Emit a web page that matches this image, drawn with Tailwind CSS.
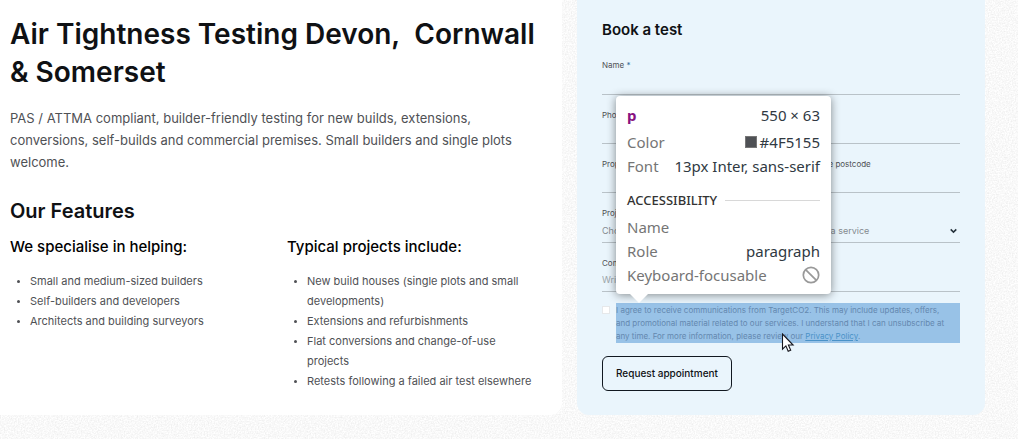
<!DOCTYPE html>
<html lang="en">
<head>
  <meta charset="UTF-8">
  <meta name="viewport" content="width=device-width, initial-scale=1">
  <title>Air Tightness Testing Devon, Cornwall &amp; Somerset</title>
  <script src="https://cdn.jsdelivr.net/npm/@tailwindcss/browser@4"></script>
</head>
<body class="relative isolate min-h-screen overflow-x-hidden bg-[#f8f8f8] font-['Inter',sans-serif] text-[#4f5155]">
  <!-- Paper grain behind the cards -->
  <svg class="absolute inset-0 -z-10 h-full w-full" aria-hidden="true">
    <filter id="grain" color-interpolation-filters="sRGB">
      <feTurbulence type="fractalNoise" baseFrequency="0.7" numOctaves="3" stitchTiles="stitch"/>
      <feColorMatrix type="matrix" values="0.12 0 0 0 0.915  0.12 0 0 0 0.915  0.12 0 0 0 0.915  0 0 0 0 1"/>
    </filter>
    <rect width="100%" height="100%" filter="url(#grain)"/>
  </svg>

  <main class="grid grid-cols-[562fr_408fr] gap-[15px] pr-[33px]">
    <!-- Service details -->
    <section class="rounded-br-xl bg-white px-[10px] pt-[15px] pb-6">
      <h1 class="text-[28px] leading-[38px] font-semibold text-[#0f1114]">Air Tightness Testing Devon,&nbsp; Cornwall &amp; Somerset</h1>
      <p class="mt-4 text-[13px] leading-[22px]">PAS / ATTMA compliant, builder-friendly testing for new builds, extensions, conversions, self-builds and commercial premises. Small builders and single plots welcome.</p>

      <h2 class="mt-6 text-xl leading-7 font-semibold text-[#0f1114]">Our Features</h2>
      <div class="mt-2 grid grid-cols-2 gap-3">
        <div>
          <h3 class="text-[15px] leading-7 font-medium text-black">We specialise in helping:</h3>
          <ul class="mt-[10px] list-disc pl-5 text-[11px] leading-5 marker:text-[9px]">
            <li>Small and medium-sized builders</li>
            <li>Self-builders and developers</li>
            <li>Architects and building surveyors</li>
          </ul>
        </div>
        <div class="pr-4">
          <h3 class="text-[15px] leading-7 font-medium text-black">Typical projects include:</h3>
          <ul class="mt-[10px] list-disc pl-5 text-[11px] leading-5 marker:text-[9px]">
            <li>New build houses (single plots and small developments)</li>
            <li>Extensions and refurbishments</li>
            <li>Flat conversions and change-of-use projects</li>
            <li>Retests following a failed air test elsewhere</li>
          </ul>
        </div>
      </div>
    </section>

    <!-- Booking form -->
    <section class="rounded-b-xl bg-[#eaf5fc] px-[25px] pt-5 pb-6">
      <h2 class="text-[15px] leading-5 font-semibold text-[#0f1114]">Book a test</h2>
      <form class="mt-[19px]">
        <div class="flex flex-col gap-[14px]">
          <div>
            <label for="name" class="block text-[8px] leading-[13px]">Name <span class="text-[#2c6e9b]">*</span></label>
            <input id="name" type="text" required class="block h-[23px] w-full border-b border-[#b9c2c8] text-[9px] outline-none">
          </div>
          <div>
            <label for="phone" class="block text-[8px] leading-[13px]">Phone <span class="text-[#2c6e9b]">*</span></label>
            <input id="phone" type="tel" required class="block h-[22px] w-full border-b border-[#b9c2c8] text-[9px] outline-none">
          </div>
          <div>
            <label for="address" class="block text-[8px] leading-[13px] whitespace-nowrap">Property address for the air test, please include the complete postcode</label>
            <input id="address" type="text" class="block h-[22px] w-full border-b border-[#b9c2c8] text-[9px] outline-none">
          </div>
          <div>
            <label for="project" class="block text-[8px] leading-[13px]">Project type</label>
            <div class="relative">
              <select id="project" class="block h-[23px] w-full appearance-none border-b border-[#b9c2c8] text-[9px] text-[#858b90] outline-none">
                <option>Choose the type of project for which you would need a service</option>
              </select>
              <svg class="pointer-events-none absolute top-2 right-[3px] h-[6px] w-[7px]" viewBox="0 0 7 6" fill="none" stroke="#25313b" stroke-width="1.5" aria-hidden="true"><path d="M.7 1.4 3.5 4.1 6.3 1.4"/></svg>
            </div>
          </div>
          <div>
            <label for="comments" class="block text-[8px] leading-[13px]">Comments</label>
            <textarea id="comments" rows="1" placeholder="Write a message" class="block h-[22px] w-full resize-none border-b border-[#b9c2c8] pt-1 text-[9px] leading-3 outline-none placeholder:text-[#9da5aa]"></textarea>
          </div>
        </div>

        <div class="relative mt-[11px] flex">
          <div class="w-[14px] shrink-0 pt-[3px]">
            <input id="consent" type="checkbox" class="block size-2 appearance-none border border-[#e6e8ea] bg-white checked:bg-[#2c6e9b]">
          </div>
          <label for="consent" class="block flex-1 bg-[#98c2e7] pt-px pr-2 text-[8px] leading-[13px] text-[#6488af]">I agree to receive communications from TargetCO2. This may include updates, offers, and promotional material related to our services. I understand that I can unsubscribe at any time. For more information, please review our <a href="#" class="text-[#4a92c8] underline">Privacy Policy</a>.</label>

          <!-- Element inspector tooltip -->
          <div class="absolute bottom-full left-[14px] mb-[9px] w-[215px] rounded-[4px] bg-white px-[11px] py-[7px] font-['Noto_Sans','Open_Sans',sans-serif] text-[15px] leading-6 text-[#303942] shadow-[0_1px_10px_rgba(0,0,0,0.45)]">
            <div class="flex justify-between"><b class="text-[#881280]">p</b><span>550 × 63</span></div>
            <div class="mt-[3px] flex justify-between"><span class="text-[#757575]">Color</span><span class="flex items-center gap-[3px]"><i class="size-3 border border-[#777] bg-[#4f5155]"></i>#4F5155</span></div>
            <div class="flex justify-between whitespace-nowrap"><span class="text-[#757575]">Font</span><span>13px Inter, sans-serif</span></div>
            <div class="mt-[10px] flex items-center gap-2 text-[13px] leading-6 font-medium text-[#333]">ACCESSIBILITY<span class="h-px flex-1 bg-[#d8d8d8]"></span></div>
            <div class="mt-[3px] text-[#757575]">Name</div>
            <div class="flex justify-between"><span class="text-[#757575]">Role</span><span>paragraph</span></div>
            <div class="flex items-center justify-between text-[#757575]">Keyboard-focusable
              <svg class="size-[18px]" viewBox="0 0 18 18" fill="none" stroke="#999" stroke-width="1.7" aria-hidden="true"><circle cx="9" cy="9" r="7.7"/><path d="m3.6 3.6 10.8 10.8"/></svg>
            </div>
            <svg class="absolute top-full left-[14px] h-[9px] w-[18px]" viewBox="0 0 18 9" fill="#fff" aria-hidden="true"><path d="M0 0h18L9 9z"/></svg>
          </div>

          <!-- Mouse pointer -->
          <svg class="absolute top-[30px] left-[179px] h-5 w-[14px]" viewBox="0 0 14 20" fill="#fff" stroke="#16161d" stroke-width="1.1" aria-hidden="true"><path d="M1.5 1v15.2l3.4-3.3 2.3 5.3 2.5-1-2.3-5.2h4.7z"/></svg>
        </div>

        <button type="submit" class="mt-[13px] h-[35px] rounded-[6px] border border-[#111820] px-[13px] text-[10px] font-medium text-[#0f1114]">Request appointment</button>
      </form>
    </section>
  </main>
</body>
</html>
